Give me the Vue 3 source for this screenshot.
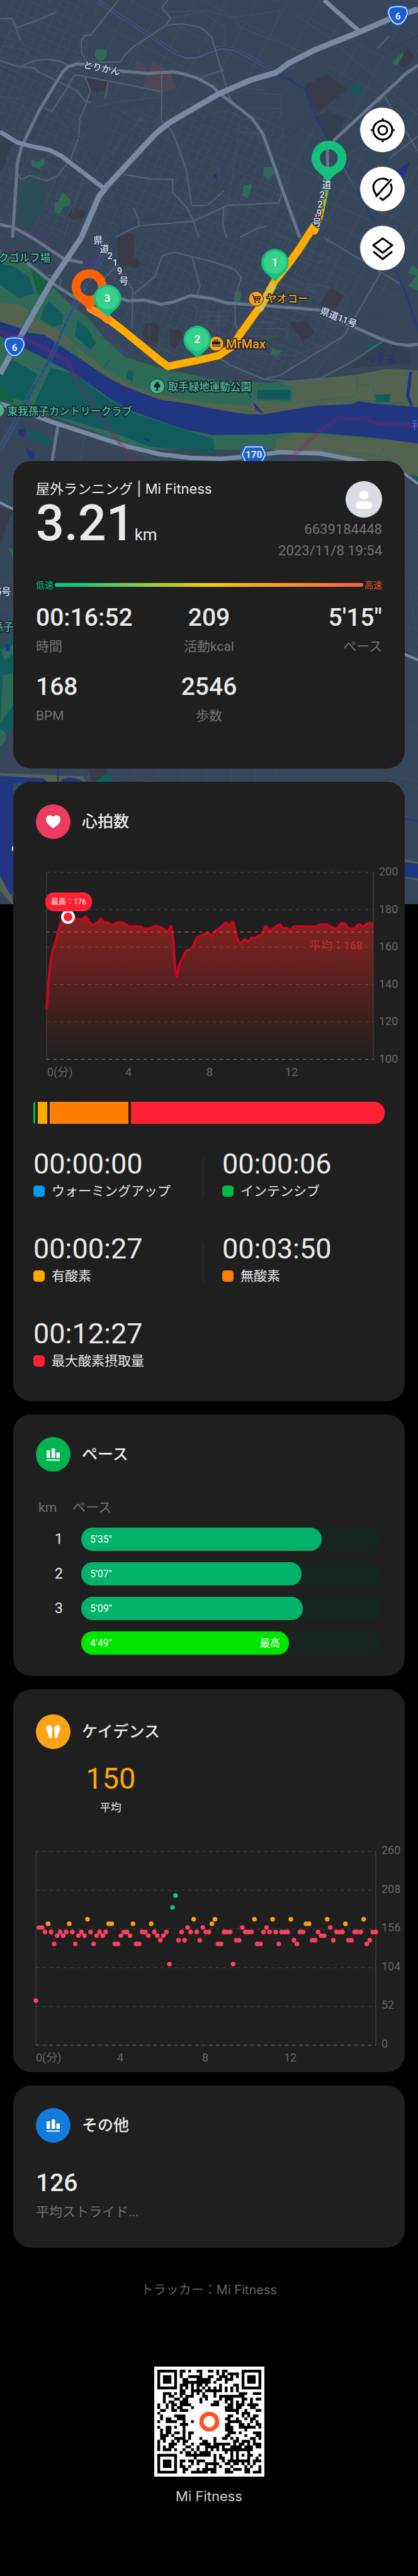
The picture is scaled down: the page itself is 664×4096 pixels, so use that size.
<script setup>
const summary = [
  { value: '00:16:52', label: '時間' },
  { value: '209', label: '活動kcal' },
  { value: '5\'15"', label: 'ペース' },
  { value: '168', label: 'BPM' },
  { value: '2546', label: '歩数' },
]

const zones = [
  { time: '00:00:00', label: 'ウォーミングアップ', kind: 'warm' },
  { time: '00:00:06', label: 'インテンシブ', kind: 'intense' },
  { time: '00:00:27', label: '有酸素', kind: 'aerobic' },
  { time: '00:03:50', label: '無酸素', kind: 'anaerobic' },
  { time: '00:12:27', label: '最大酸素摂取量', kind: 'vo2' },
]

const laps = [
  { km: '1', pace: '5\'35"', share: 80 },
  { km: '2', pace: '5\'07"', share: 73.3 },
  { km: '3', pace: '5\'09"', share: 73.7 },
  { km: '', pace: '4\'49"', share: 69, best: true },
]

// Heart rate: [position along the run in per mille, bpm]
const heart = [
  [0, 127], [10, 149], [20, 159], [32, 165.5], [41, 171.5], [50, 174.5], [60, 175.6], [68, 176], [80, 175.2],
  [90, 175.3], [100, 175], [110, 175], [120, 176.3], [130, 173.5], [140, 172], [150, 172.5], [158, 173.6],
  [165, 175.2], [173, 173.6], [179, 173], [186, 173.2], [195, 172.3], [205, 172], [216, 173], [228, 173.2],
  [240, 172.4], [252, 171], [265, 171], [286, 171], [297, 170], [318, 170], [328, 171], [340, 171], [350, 170.4],
  [362, 169], [374, 168.9], [381, 171.2], [387, 164], [394, 148], [399, 144.6], [405, 150], [417, 154.5],
  [428, 158], [441, 159], [450, 161], [460, 165], [470, 166], [482, 166.8], [496, 167.2], [506, 166], [517, 168.8],
  [526, 169.6], [537, 171.4], [549, 173], [561, 172], [570, 173.6], [576, 170], [581, 166], [588, 163], [594, 162],
  [606, 164], [616, 162.9], [628, 165], [638, 165], [650, 166], [661, 167], [667, 170], [672, 171.2], [681, 169],
  [692, 170], [702, 171], [713, 172.2], [724, 170.2], [735, 170.1], [746, 169], [757, 171], [768, 171], [800, 171],
  [825, 171], [837, 172.1], [857, 172.1], [869, 171], [881, 169.9], [889, 170], [898, 172], [907, 172.8], [916, 172],
  [924, 170], [943, 170], [951, 171.6], [958, 172.2], [966, 171], [976, 171.8], [989, 173], [995, 172.7], [1000, 172],
].map(([t, bpm]) => [53 + t * 0.519, 17 + (200 - bpm) * 2.975])

const heartLine = heart.reduce((d, [x, y], i, all) => {
  if (!i) return `M${x} ${y}`
  const p0 = all[Math.max(i - 2, 0)]
  const p1 = all[i - 1]
  const p3 = all[Math.min(i + 1, all.length - 1)]
  const n = (v) => v.toFixed(1)
  return `${d} C${n(p1[0] + (x - p0[0]) / 8)} ${n(p1[1] + (y - p0[1]) / 8)} ${n(x - (p3[0] - p1[0]) / 8)} ${n(y - (p3[1] - p1[1]) / 8)} ${n(x)} ${n(y)}`
}, '')
const heartArea = `${heartLine} L572 314.5 L53 314.5Z`
const heartTicks = [200, 180, 160, 140, 120, 100].map((v, i) => ({ v, y: 17 + i * 59.5 }))

// Cadence: steps per minute, equally spaced over the run
const cadence = [
  60, 158, 158, 152, 163, 152, 136, 147, 152, 147, 152, 163, 152, 136, 147, 152, 147, 169, 152, 136, 147, 152, 147,
  152, 163, 163, 136, 136, 147, 152, 152, 147, 163, 136, 136, 152, 152, 147, 163, 152, 147, 141, 147, 152, 109, 185,
  201, 141, 152, 141, 158, 152, 169, 152, 141, 158, 152, 152, 163, 169, 136, 136, 152, 152, 152, 109, 141, 141, 158,
  152, 152, 152, 169, 136, 136, 152, 158, 152, 169, 152, 136, 152, 152, 152, 169, 141, 136, 152, 152, 163, 163, 141,
  141, 152, 147, 147, 169, 158, 141, 152, 152, 152, 163, 141, 141, 152, 152, 152, 169, 136, 141, 152, 152,
].map((v, i, all) => ({
  x: 36 + (i * 540) / (all.length - 1),
  y: 326 - (v * 308) / 260,
  tone: v > 180 ? 'fast' : v > 160 ? 'mid' : 'slow',
}))
const cadenceTicks = [260, 208, 156, 104, 52, 0].map((v, i) => ({ v, y: 18 + i * 61.6 }))

// QR code: dark columns of every row
const qrRows = [
  '0-6 8-9 11 14-15 18-19 21 23-24 30-36',
  '0 6 8 15 21 23 25-28 30 36',
  '0 2-4 6 8 11-15 18-19 22-24 26 28 30 32-34 36',
  '0 2-4 6 9-10 14-18 21-22 24-26 30 32-34 36',
  '0 2-4 6 9-18 20 24 30 32-34 36',
  '0 6 8-10 12 14-15 17 22 27-28 30 36',
  '0-6 8 10 12 14 16 18 20 22 24 26 28 30-36',
  '8-9 12-15 17-22 24 26 28',
  '2-4 6 8-9 12 14 16 20 29-31 34-36',
  '2 4-5 8 10-12 16-17 20 22-30',
  '2 6-7 9-10 15 17 22 24-26 30-31 33 35-36',
  '2 4-5 8-10 15 20-21 24 26 28 30 33',
  '0 3 5-6 8-11 19-21 25-26 28-30 32-35',
  '0 3 5 7-8 12 24-26 28-29 33-34',
  '1-2 5-6 8-10 24-28 31 35-36',
  '0 28 30-32',
  '1 6-9 25-26 30 32 34-35',
  '1 3-4 7-9 24-25 28 31 33-34',
  '0 3-6 9 12 25-29 33 35',
  '8-10 24-25 29-30 32 35-36',
  '0 3-4 6 9 24-26 29-34 36',
  '1 3-4 9 24-26 31',
  '1 3-4 6-7 9 11-12 25-27 29 34-36',
  '1-3 5 9 11 24-25 31 35-36',
  '1-2 6-9 11 15 20 23-24 26 28 33-34 36',
  '0 2 5 7 9-10 16-17 20 27-28 30-32 34',
  '0 4-6 9 12 15-18 20-25 27 29-30 32 34-36',
  '0 2 4-5 10-11 14 17-21 23 26-29 31-33 35-36',
  '0 2-4 6 9 12 14 17 19 21 23-33',
  '8 10-11 13 15-18 24 26 28 32',
  '0-6 10-18 20 22 26 28 30 32-33 36',
  '0 6 13 20 22-23 26 28 32 35',
  '0 2-4 6 8-9 11-12 14-16 20 23 25-32 34-36',
  '0 2-4 6 8 12 14 17-21 24-25 27-28 30 32 34',
  '0 2-4 6 8-9 11 17 20 22 26 31 33 36',
  '0 6 9-10 14 16-20 24-25 27-29 31-32 36',
  '0-6 9 12-17 19-20 24-26 31-32 34-36',
]
const qrPath = qrRows
  .map((row, y) =>
    row
      .split(' ')
      .map((run) => {
        const [a, b = a] = run.split('-').map(Number)
        return `M${a} ${y}h${b - a + 1}v1h${a - b - 1}z`
      })
      .join(''),
  )
  .join('')

const kmPins = [
  { n: 3, x: 289, y: 803 },
  { n: 2, x: 531, y: 914 },
  { n: 1, x: 740, y: 707 },
]
const roadChars = [
  { c: '道', x: 879, y: 498 },
  { c: '2', x: 867, y: 526 },
  { c: '2', x: 862, y: 551 },
  { c: '9', x: 859, y: 575 },
  { c: '号', x: 853, y: 600 },
  { c: '県', x: 264, y: 648 },
  { c: '道', x: 281, y: 672 },
  { c: '2', x: 296, y: 690 },
  { c: '1', x: 310, y: 709 },
  { c: '9', x: 322, y: 731 },
  { c: '号', x: 333, y: 757 },
]
</script>

<template>
  <div class="page">
    <svg class="map" viewBox="0 0 1125 2436" role="img" aria-label="ランニングルート">
      <defs>
        <pattern id="streets" width="46" height="38" patternUnits="userSpaceOnUse" patternTransform="rotate(24)">
          <path d="M0 8H46M12 0V38M12 24H34V38M34 8V24" class="lane" />
        </pattern>
        <pattern id="fields" width="74" height="92" patternUnits="userSpaceOnUse" patternTransform="rotate(28)">
          <path d="M0 20H74M20 0V92" class="lane" />
        </pattern>
        <linearGradient id="track" gradientUnits="userSpaceOnUse" x1="885" y1="480" x2="850" y2="570">
          <stop offset="0" stop-color="#15bf7c" />
          <stop offset="1" stop-color="#ffae00" />
        </linearGradient>
      </defs>
      <rect width="1125" height="2436" fill="#37475b" />
      <path d="M0 0H240L230 280 250 640H0ZM300 300 600 260 500 520 300 640H220ZM560 300H760L800 640H420L440 480Z" fill="url(#streets)" />
      <path d="M240 0H860L960 120 760 190 580 250 300 280ZM900 60 1125 60V800H760L700 500 860 260Z" fill="url(#fields)" />
      <path d="M250 640H900L960 900 700 1030 330 900Z" fill="url(#streets)" />

      <g class="tile" transform="scale(.7175 .40816)">
        <path class="dark" d="M0 880 45 950 30 1010 15 1100 0 1120ZM1230 735 1290 780 1280 860 1250 930 1230 920 1185 770Z" />
        <path class="deep" d="M80 1185 113 1160 170 1195 165 1380 130 1470 100 1515 60 1430Z" />
        <path class="teal" d="M1340 548 1355 570 1352 620 1340 642 1313 590Z" />
        <path class="rose" d="M510 400 545 430 550 470 510 470ZM570 402 645 490 642 492 560 475ZM548 495H607V600L540 570ZM612 490H642L660 590 612 608Z" />
        <path class="brown" d="M320 510 405 540 400 600 345 605 325 560ZM1230 492 1300 590 1190 750 1150 640 1143 560ZM1530 315 1558 380 1520 455 1490 420ZM275 1365 320 1390 315 1440 270 1450 255 1420ZM485 1535 508 1555V1568H460Z" />
        <path class="park" d="M360 325 400 328 402 360 385 405 365 395 355 365ZM118 1050 140 1070 165 1042V1085L145 1115 118 1095ZM235 1265 265 1320 262 1350 240 1365 222 1412 207 1400 205 1340 218 1330ZM990 1105 1022 1103 1028 1140 1005 1185 988 1155ZM915 1220 945 1217 930 1310 910 1290ZM1508 345 1515 355 1490 432 1470 420Z" />
        <path class="violet" d="M85 1515 100 1540 170 1520 177 1568H80Z" />
        <path class="water" d="M1490 1125 1540 1065 1520 1160 1505 1180ZM800 1155 812 1148 814 1175 802 1180ZM1078 512 1110 545 1095 545ZM358 597 368 603 362 615ZM1150 560 1158 568 1153 578Z" />
        <path class="creek-edge" d="M360 0 555 225 660 350 700 380 740 375 810 322 840 315 880 325 960 400 1035 480M1290 1100 1340 1250" />
        <path class="creek" d="M360 0 555 225 660 350 700 373 740 368 810 320 840 313 880 322 960 400 1035 480 1080 520 1140 585 1185 770 1230 930 1300 1120 1340 1250 1410 1480" />
        <path class="stream" d="M1355 230 1568 570M1260 310 1440 620 1568 900M805 920 835 1090 835 1250M990 15 1060 30 1110 75" />
        <path class="alley" d="M445 0 340 232 318 235 305 270V345L320 390V410H452L460 380 500 310 620 170 640 120 607 50 630 0M620 168 680 157 745 175 770 205 795 250 825 430 860 640 880 690M0 400 60 435 130 450 140 470 290 600 315 660 340 680M85 432 130 400 180 392 225 405 255 432M320 510 340 600 315 720 300 780 295 910 265 1050 215 1160 175 1195 113 1158 80 1185 68 1150M195 735 245 600 275 505 290 495 610 605M165 710 195 738M607 490 605 800 640 850 665 950 700 1130 718 1350M465 1152 560 1180 648 1185V1270L700 1370 725 1450 745 1568M430 1568 520 1490 725 1460 855 1355 1045 1340 1060 1270M718 1358 778 1355 840 1262M0 122H45L60 185 77 268M60 185 130 140 210 82M405 540 395 650M755 520 770 500 840 460M500 1370 520 1450V1490M840 1370 835 1480 850 1568M900 1568 960 1510 1000 1492M1415 320 1460 240M1568 1000 1440 630 1420 680M1460 1045 1568 900" />
        <path class="lane" d="M610 80 780 70 880 120 900 180 1000 250 1150 350M640 120 760 80 845 180 840 300M0 300 100 330 130 420M860 120 1050 70 1030 180M920 715H1055V625L930 610M780 750 860 730 910 790 980 780M430 700 500 790 600 810M350 710 420 680 600 640M900 870 990 890M1000 600 940 580 850 620M1240 1340 1420 1480M1280 1040 1400 930M830 1568 870 1180 900 800M0 640 80 650 100 760 70 860M1110 100 1220 230 1400 500 1568 760M240 1568 300 1250 420 1000 540 760" />
        <path class="rail" d="M0 445 60 500 130 580 205 710 290 900 375 1120 435 1280 455 1400 450 1568M1568 235 1450 340 1270 620 1180 760 860 1240 780 1360 700 1420 520 1450 470 1500 430 1568" />
        <path class="rail ties" d="M0 445 60 500 130 580 205 710 290 900 375 1120 435 1280 455 1400 450 1568M1568 235 1450 340 1270 620 1180 760 860 1240 780 1360 700 1420 520 1450 470 1500 430 1568" />
        <path class="street" d="M47 1568 65 1080 80 970 150 720 235 475 255 440 290 422 330 425 400 450 440 467 555 485 650 475 690 488 740 515 800 575 825 620 890 705 945 780 985 880 1010 1000 1065 1280 1125 1568M1568 430 1520 490 1250 930M1227 960 1230 1180M0 1482 50 1500 120 1568" />
        <path class="road" d="M0 870 65 940 110 962 185 990 230 1030 395 1250M1215 0 1350 210" />
        <path class="trunk" d="M1568 60 1455 130 1350 210 1180 330 1085 415 1035 480 945 525 820 620 635 810 585 880 400 1230 370 1300 305 1568" />
      </g>

      <g class="tile" transform="translate(0 640) scale(.7175 .40816)">
        <path class="park" d="M0 85 90 160 200 330 270 450 330 530 400 680 470 790 600 860 780 930 1000 960 1340 905 1450 868 1568 875V1400H0Z" />
        <path class="teal" d="M0 170 50 190 110 260 130 370 70 400 0 310ZM165 460 185 420 238 510 235 570 200 590 152 540ZM30 790 140 900 110 1090 0 1040V900ZM190 860 280 900 330 970 420 1080 500 1160 600 1215 700 1275 800 1330 805 1420 560 1380 430 1290 230 1190 120 1130ZM290 540 330 600 360 700 340 740 280 650ZM480 875 502 890 498 950 475 930ZM965 1005H1090V1070H965Z" />
        <path class="moss" d="M110 170 200 330 160 395 140 370ZM0 980 50 1050 50 1090 0 1090Z" />
        <path class="olive" d="M0 430 65 440 110 480 85 560 80 600 0 555ZM125 500 150 560 220 610 280 700 265 745 165 640 110 625 105 560ZM275 705 400 880 500 980 600 1035 700 1070 830 1100 935 1108 950 1075 1095 1090 1100 990 1050 962 1340 905 1450 868 1568 880V1120L1340 1090 1180 1115 985 1170 830 1145 600 1070 470 990 300 800ZM1040 1330 1120 1290 1568 1350V1568H1500L1350 1475 1130 1400 1030 1410Z" />
        <path class="teal" d="M1408 1035H1462V1087H1408ZM1350 770 1390 710 1445 675 1430 715Z" />
        <path class="land" d="M0 1080 230 1200 500 1380 640 1430 830 1465 1050 1430 1200 1430 1450 1520V1600H0Z" />
        <path class="teal" d="M115 1260 192 1335 185 1385 100 1300Z" />
        <path class="river" d="M0 555 80 600 110 630 165 640 230 720 300 800 400 920 470 985 600 1070 700 1095 830 1140 920 1165 985 1168 1080 1140 1180 1110 1320 1100 1345 1080 1400 1095 1568 1120V1360L1400 1320 1200 1290 1100 1285 1000 1300 800 1303 700 1270 600 1210 500 1150 420 1070 330 960 280 900 200 830 110 745 0 650ZM948 1080 975 1130 990 1165 960 1140ZM70 1265 95 1260 90 1320 68 1300ZM95 1380 130 1420V1460H110ZM537 1320 565 1335 555 1352Z" />
        <path class="dark" d="M1440 685 1530 700 1540 830 1315 865 1340 820Z" />
        <path class="brown" d="M1240 330 1290 385 1250 490 1195 450ZM1085 560 1150 550 1180 630 1135 685ZM545 570 565 560 595 575 600 610 585 730 545 710 535 640ZM635 595 675 610 685 650 655 740 635 690ZM440 0H505L500 120 525 160 520 200 440 180Z" />
        <path class="violet" d="M370 90 385 150 345 190 310 200 310 170 340 150ZM935 450 1015 460 1010 490 940 480ZM910 640 955 620 950 680 905 690ZM400 570 430 610 410 670 395 640ZM395 270 440 330 410 330Z" />
        <path class="park" d="M890 352 905 362 900 425 882 425ZM1020 730 1055 750 1040 785 1015 765ZM1545 180 1568 210V260L1530 230ZM1568 240V350L1530 320Z" />
        <path class="water" d="M1418 755H1436V825H1418ZM1455 775H1480V785H1455ZM1455 800H1480V825H1455ZM1392 805H1404V822H1392Z" />
        <path class="creek" d="M1480 190 1520 360 1568 600M930 1020 942 1060" />
        <path class="channel" d="M1540 885 1530 1050 1545 1110" />
        <path class="stream" d="M800 230 830 320 880 500M870 800 930 870 1000 910 1130 860M1250 610 1380 690 1280 740M1310 580 1440 500 1500 400M1040 1475V1430M395 850 410 810" />
        <path class="field-line" d="M1340 905V1000L1325 1050 1095 1090M1340 970 1400 980 1410 1080 1525 1095 1520 900M1100 990 1000 960M1340 1070 1430 1090M1420 1470 1440 1380M1220 1400 1420 1440 1530 1490M280 540 450 740 560 880 650 1050M430 860 500 900 650 950" />
        <path class="alley" d="M610 120 655 97 720 125 800 160 880 210 905 262 880 400 883 570 900 640M495 600 497 340 430 180M610 120 580 260 497 380M1215 0 1500 305M820 790 860 840 990 935 1050 910 1290 650 1310 590 1430 225M990 935 1085 950 1200 930 1310 830 1440 680M180 250 205 250 230 280 220 330M440 180 385 280M720 125 750 320 740 380" />
        <path class="lane" d="M560 380V680L660 780M700 300 740 480 720 700M740 490H860M745 520H860M740 550H855M735 580H850M780 450V640M820 460V640M930 480 1080 560 1080 700M960 560H1040M950 600H1070M930 650H1060M920 760 1100 780 1260 680M1100 480 1310 590M1130 300 1240 330M960 280 1180 360M1060 80 1200 170 1300 60M1180 900 1290 650M540 700 640 760M220 1240 320 1300 300 1475M360 1330 600 1475" />
        <path class="street" d="M120 0 240 140 310 165M100 165 220 330 330 450M450 400 480 418 540 412 605 440 650 425 715 383 800 405 850 432 1000 450 1200 478 1290 560 1430 670 1480 700 1530 712 1568 705M218 1235 195 1475" />
        <path class="rail-band" d="M400 60 370 170 320 310 240 590 200 760 90 1110 0 1400" />
        <path class="rail" d="M430 0 370 170 320 310 240 590 200 760 90 1110 0 1400" />
        <path class="rail ties" d="M430 0 370 170 320 310 240 590 200 760 90 1110 0 1400" />
        <path class="trunk" d="M305 0 190 300 100 580 0 900" />
        <path class="road" d="M0 1095 60 1130 200 1220 480 1380 600 1430 720 1455 830 1460 900 1450 1050 1417 1200 1425 1350 1475 1480 1530" />
        <path class="border-glow" d="M0 620 100 670 250 810 300 980 370 1170 500 1475M1080 1475 1190 1290 1265 1195H1370L1400 1220 1568 1240" />
        <path class="border" d="M0 620 100 670 250 810 300 980 370 1170 500 1475M1080 1475 1190 1290 1265 1195H1370L1400 1220 1568 1240" />
      </g>

      <!-- areas seen around the cards -->
      <path class="olive" d="M1080 1220H1125V1285L1085 1262Z" />
      <path class="teal" d="M1104 1274 1125 1284V1298ZM0 1740 36 1712V1960L0 1985Z" />
      <path class="brown" d="M0 1367 36 1373 0 1467Z" />
      <path class="park" d="M36 1735 2 1750 12 1780 36 1760ZM8 1820 36 1812V1900L0 1950ZM0 1965C24 1970 20 2000 0 2012ZM24 1476 36 1480V1506Z" />
      <path class="water" d="M14 1736H28L26 1754H16Z" />
      <path d="M0 1354 36 1372M1088 1276 1125 1303M1088 1762 1125 1778" stroke="#7889a3" stroke-width="7" fill="none" />
      <path class="lane" d="M1088 1430 1125 1440M1088 1520 1125 1590M1095 1640 1110 1620 1125 1630M1088 1680 1125 1700M1100 1560 1125 1740M1088 1950 1125 1962M0 2018 36 1998M75 2070V2100M105 2070V2090M205 2070 230 2100M296 2070V2106M361 2070V2106M426 2070V2106M490 2070V2106M556 2070V2106M622 2070V2106M687 2070V2106M746 2070 738 2106M960 2070 1125 2105M1125 2120 1090 2180M300 2090 420 2106M0 1570 36 1560M0 1640 36 1650" />
      <path class="olive" d="M0 2083 225 2091 232 2106H0ZM0 2362 32 2412 36 2440 0 2400ZM1088 2314 1125 2322V2372L1088 2364Z" />
      <path d="M0 2090 118 2097 128 2110H36V2395L28 2411 0 2360ZM160 2110C165 2090 205 2090 230 2110ZM1088 2322 1125 2327V2367L1088 2362Z" fill="#203681" />
      <path d="M156 2070V2106M1088 2205 1125 2213" stroke="#22398a" stroke-width="4" />
      <path class="brown" d="M236 2070H285L292 2084 256 2106 244 2098Z" />
      <path d="M288 2083 305 2106H256Z" fill="#006860" />
      <circle cx="42" cy="2286" r="10" fill="#fff" />

      <path d="M881 480 868 543 854 604 846 622" class="route" stroke="url(#track)" />
      <path d="M854 596 825 640 804 673 775 713 739 758 707 816 646 901 624 934 588 958 531 971 452 987 430 971 330 889 287 856 244 832" class="route" stroke="#ffae00" />
      <path d="M733 772 708 815 700 830" class="route" stroke="#d8bf3a" />
      <path d="M290 862 270 845 242 830" class="route" stroke="#ff8a1a" />

      <g class="label pale">
        <text x="223" y="182" transform="rotate(12 223 182)">とりかん</text>
        <text x="860" y="844" transform="rotate(22 860 844)">県道11号</text>
        <text v-for="(r, i) in roadChars" :key="i" :x="r.x" :y="r.y + 8" text-anchor="middle">{{ r.c }}</text>
        <text x="-10" y="1603">5号</text>
      </g>
      <g class="label green">
        <text x="-4" y="705">クゴルフ場</text>
        <text x="452" y="1052">取手緑地運動公園</text>
        <text x="20" y="1118">東我孫子カントリークラブ</text>
        <text x="-20" y="1700">孫子</text>
      </g>
      <g class="label amber">
        <text x="717" y="815">ヤオコー</text>
        <text x="608" y="939" class="latin">MrMax</text>
      </g>
      <text x="1108" y="1156" class="river-name">利</text>

      <g stroke="#17202c" stroke-width="1.5">
        <circle cx="689" cy="805" r="20" fill="#f5a11a" />
        <circle cx="582" cy="926" r="20" fill="#f5a11a" />
        <circle cx="423" cy="1041" r="20" fill="#45b48b" />
        <circle cx="-8" cy="1105" r="20" fill="#45b48b" />
      </g>
      <g fill="none" stroke="#17202c" stroke-width="2">
        <path d="M677 795H681L685 809H698L701 799H682M684 804H700M687 799V809M692 799V809M697 799V809" />
        <circle cx="687" cy="814" r="1.5" /><circle cx="697" cy="814" r="1.5" />
        <path d="M578 920V916H586V920" />
        <path d="M571 920H593V928H571ZM571 931H593V933H571Z" fill="#17202c" stroke="none" />
        <path d="M423 1029C419 1029 419 1033 418 1035 414 1036 413 1043 418 1044H421V1050L418 1052H428L425 1050V1044H429C433 1043 432 1036 428 1035 427 1032 427 1029 423 1029Z" fill="#17202c" stroke="none" />
      </g>

      <g v-for="s in [[1071, 42], [39, 935]]" :key="s[1]" :transform="`translate(${s[0]} ${s[1]})`">
        <path d="M-22-26Q0-31 22-26 30-18 29-6 24 12 13 22 0 32-13 22-24 12-29-6-30-18-22-26Z" fill="#1a5fd0" />
        <path d="M-19-22Q0-27 19-22 26-15 25-5 21 10 11 19 0 27-11 19-21 10-25-5-26-15-19-22Z" fill="#1a5fd0" stroke="#d3def2" stroke-width="3" />
        <text y="10" class="shield">6</text>
      </g>
      <g transform="translate(683 1224)">
        <path d="M-26-24H26L36 0 26 24H-26L-36 0Z" fill="#1a5fd0" />
        <path d="M-22-20H22L31 0 22 20H-22L-31 0Z" fill="none" stroke="#d3def2" stroke-width="3" />
        <text y="9" class="shield">170</text>
      </g>

      <path fill-rule="evenodd" d="M883 488Q870 474 850 457A47 47 0 1 1 919 459Q900 470 883 488ZM885 402A24 24 0 1 0 885 450 24 24 0 1 0 885 402Z" fill="#15bf7c" />
      <path fill-rule="evenodd" d="M240 834Q222 818 206 805A47 47 0 1 1 274 805Q258 818 240 834ZM240 749A24 24 0 1 0 240 797 24 24 0 1 0 240 749Z" fill="#ff6200" />
      <g v-for="p in kmPins" :key="p.n" :transform="`translate(${p.x} ${p.y})`">
        <path d="M0 51Q-13 38-27 26A37 37 0 1 1 27 26Q13 38 0 51Z" fill="#15bf7c" />
        <circle r="31" fill="#39d08c" />
        <text y="10" class="pin-number">{{ p.n }}</text>
      </g>
    </svg>

    <nav class="tools" aria-label="地図">
      <button type="button" aria-label="現在地">
        <svg viewBox="0 0 48 48"><circle cx="24" cy="24" r="15" /><circle cx="24" cy="24" r="7" /><path d="M24 5V10M24 38V43M5 24H10M38 24H43" /></svg>
      </button>
      <button type="button" aria-label="ピンを隠す">
        <svg viewBox="0 0 48 48"><path d="M14 33C8 25 8 18 11 14 16 6 27 5 33 10M36 15C40 21 38 28 34 33L24 41 19 37M38 8 13 36" /></svg>
      </button>
      <button type="button" aria-label="レイヤー">
        <svg viewBox="0 0 48 48"><path d="M24 8 39 19 24 31 9 19ZM9 29 24 41 39 29" /></svg>
      </button>
    </nav>

    <main class="content">
      <section class="card summary">
        <header class="run">
          <div>
            <h1>屋外ランニング | Mi Fitness</h1>
            <p class="distance"><strong>3.21</strong><span>km</span></p>
          </div>
          <div class="user">
            <svg class="avatar" viewBox="0 0 58 58" aria-hidden="true">
              <circle cx="29" cy="29" r="29" fill="#dadde4" />
              <circle cx="29" cy="22" r="7" fill="#fff" />
              <rect x="16" y="32" width="26" height="12" rx="6" fill="#fff" />
            </svg>
            <p>6639184448</p>
            <p>2023/11/8 19:54</p>
          </div>
        </header>
        <div class="speed"><span class="low">低速</span><i></i><span class="high">高速</span></div>
        <dl class="stats">
          <div v-for="s in summary" :key="s.label"><dd>{{ s.value }}</dd><dt>{{ s.label }}</dt></div>
        </dl>
      </section>

      <section class="card heart">
        <header class="head">
          <svg viewBox="0 0 55 55" aria-hidden="true">
            <circle cx="27.5" cy="27.5" r="27.5" fill="#ec3c60" />
            <path d="M27.5 20C24 15 16 17 16 24 16 30 22 34 27.5 38 33 34 39 30 39 24 39 17 31 15 27.5 20Z" fill="#fff" />
          </svg>
          <h2>心拍数</h2>
        </header>
        <svg class="chart" viewBox="0 0 622 350" role="img" aria-label="心拍数">
          <defs>
            <linearGradient id="glow" x1="0" y1="0" x2="0" y2="1">
              <stop offset="0" stop-color="#ff261e" stop-opacity=".46" />
              <stop offset="1" stop-color="#ff261e" stop-opacity="0" />
            </linearGradient>
          </defs>
          <path :d="heartArea" fill="url(#glow)" />
          <path d="M53 17V314M572 17V314" class="axis" />
          <line v-for="t in heartTicks" :key="t.v" x1="53" x2="572" :y1="t.y" :y2="t.y" class="grid" :class="{ base: t.v === 100 }" />
          <path :d="heartLine" class="pulse" />
          <path d="M53 112H572" class="mean" />
          <text x="555" y="140" class="mean-text">平均：168</text>
          <circle cx="87" cy="88" r="9" fill="#ff2033" stroke="#fff" stroke-width="4" />
          <rect x="51" y="49" width="74" height="30" rx="14" fill="#ff2033" />
          <text x="88" y="68" class="peak-text">最高：176</text>
          <text v-for="t in heartTicks" :key="'h' + t.v" x="581" :y="t.y + 5" class="tick">{{ t.v }}</text>
          <text x="54" y="341" class="tick">0(分)</text>
          <text x="183" y="341" class="tick center">4</text>
          <text x="312" y="341" class="tick center">8</text>
          <text x="442" y="341" class="tick center">12</text>
        </svg>
        <div class="split"><i class="intense"></i><i class="aerobic"></i><i class="anaerobic"></i><i class="vo2"></i></div>
        <dl class="zones">
          <div v-for="z in zones" :key="z.kind"><dd>{{ z.time }}</dd><dt><i :class="z.kind"></i>{{ z.label }}</dt></div>
        </dl>
      </section>

      <section class="card pace">
        <header class="head">
          <svg viewBox="0 0 55 55" aria-hidden="true">
            <circle cx="27.5" cy="27.5" r="27.5" fill="#02b44f" />
            <path d="M17 22Q17 21 18 21H21.5Q22.5 21 22.5 22V33H17ZM25 19Q25 18 26 18H29.5Q30.5 18 30.5 19V33H25ZM32.5 25.5Q32.5 24.5 33.5 24.5H37Q38 24.5 38 25.5V33H32.5ZM17 35.5H38V37.5H17Z" fill="#fff" />
          </svg>
          <h2>ペース</h2>
        </header>
        <table>
          <thead><tr><th scope="col">km</th><th scope="col">ペース</th></tr></thead>
          <tbody>
            <tr v-for="l in laps" :key="l.pace">
              <td class="km">{{ l.km }}</td>
              <td class="lap"><div class="rail-bar"><div class="fill" :class="{ best: l.best }" :style="{ width: l.share + '%' }"><span>{{ l.pace }}</span><span v-if="l.best">最高</span></div></div></td>
            </tr>
          </tbody>
        </table>
      </section>

      <section class="card cadence">
        <header class="head">
          <svg viewBox="0 0 55 55" aria-hidden="true">
            <circle cx="27.5" cy="27.5" r="27.5" fill="#fda416" />
            <path d="M21 17C24 17 26 20 26 24 26 27 25 29 25.5 33 26 36 25 38 23.5 38 21 38 20.5 36 20 33 19.5 29 16.5 27 16.5 23 16.5 19 18.5 17 21 17ZM34 17C31 17 29 20 29 24 29 27 30 29 29.5 33 29 36 30 38 31.5 38 34 38 34.5 36 35 33 35.5 29 38.5 27 38.5 23 38.5 19 36.5 17 34 17Z" fill="#fff" />
          </svg>
          <h2>ケイデンス</h2>
        </header>
        <div class="average"><strong>150</strong><span>平均</span></div>
        <svg class="chart" viewBox="0 0 622 364" role="img" aria-label="ケイデンス">
          <path d="M36 18V326M576 18V326" class="axis" />
          <line v-for="t in cadenceTicks" :key="t.v" x1="36" x2="576" :y1="t.y" :y2="t.y" class="grid" :class="{ base: t.v === 0 }" />
          <circle v-for="(c, i) in cadence" :key="i" :cx="c.x" :cy="c.y" r="3.7" :class="c.tone" />
          <text v-for="t in cadenceTicks" :key="'c' + t.v" x="585" :y="t.y + 4" class="tick">{{ t.v }}</text>
          <text x="36" y="352" class="tick">0(分)</text>
          <text x="170" y="352" class="tick center">4</text>
          <text x="305" y="352" class="tick center">8</text>
          <text x="440" y="352" class="tick center">12</text>
        </svg>
      </section>

      <section class="card other">
        <header class="head">
          <svg viewBox="0 0 55 55" aria-hidden="true">
            <circle cx="27.5" cy="27.5" r="27.5" fill="#137bdc" />
            <path d="M17 22Q17 21 18 21H21.5Q22.5 21 22.5 22V33H17ZM25 19Q25 18 26 18H29.5Q30.5 18 30.5 19V33H25ZM32.5 25.5Q32.5 24.5 33.5 24.5H37Q38 24.5 38 25.5V33H32.5ZM17 35.5H38V37.5H17Z" fill="#fff" />
          </svg>
          <h2>その他</h2>
        </header>
        <dl class="stats"><div><dd>126</dd><dt>平均ストライド...</dt></div></dl>
      </section>
    </main>

    <footer class="foot">
      <p class="tracker">トラッカー：Mi Fitness</p>
      <svg class="qr" viewBox="-1.1 -1.1 39.2 39.2" role="img" aria-label="QRコード">
        <rect x="-1.1" y="-1.1" width="39.2" height="39.2" fill="#fff" />
        <path :d="qrPath" fill="#000" />
        <rect x="13" y="13" width="11.1" height="11" rx="1" fill="#fff" />
        <circle cx="18.5" cy="18.5" r="2.8" fill="none" stroke="#ff5125" stroke-width="1.5" />
      </svg>
      <p class="brand">Mi Fitness</p>
    </footer>
  </div>
</template>

<style>
body {
  margin: 0;
  background: #000;
}
</style>

<style scoped>
.page {
  position: relative;
  background: #000;
  color: #eaeaea;
  font-family: Roboto, "Noto Sans CJK JP", sans-serif;
}
h1, h2, p, dl, dd, dt {
  margin: 0;
  font-weight: 400;
}
.map {
  position: absolute;
  top: 0;
  left: 0;
  width: 100%;
  height: auto;
}
.tile path {
  vector-effect: non-scaling-stroke;
  stroke-linejoin: round;
}
.land { fill: #37475b; }
.dark { fill: #313f50; }
.deep { fill: #2e4c58; }
.teal { fill: #125b5c; }
.moss { fill: #165f42; }
.park { fill: #2f6a57; }
.olive { fill: #53634f; }
.brown { fill: #393c48; }
.rose { fill: #504653; }
.violet { fill: #433f6d; }
.water, .river { fill: #203681; }
.lane { fill: none; stroke: #455364; stroke-width: 1; }
.alley { fill: none; stroke: #56616f; stroke-width: 2; }
.street { fill: none; stroke: #67758b; stroke-width: 5; }
.road { fill: none; stroke: #7889a3; stroke-width: 7; }
.trunk { fill: none; stroke: #7889a3; stroke-width: 9; }
.creek-edge { fill: none; stroke: #4c5a5c; stroke-width: 5; }
.creek { fill: none; stroke: #22398a; stroke-width: 2; }
.channel { fill: none; stroke: #203681; stroke-width: 5; }
.stream { fill: none; stroke: #2b3f76; stroke-width: 1; }
.field-line { fill: none; stroke: #137066; stroke-width: 1; }
.rail { fill: none; stroke: #2b4165; stroke-width: 1; }
.ties { stroke-width: 4; stroke-dasharray: 1 9; }
.rail-band { fill: none; stroke: #3a5a86; stroke-opacity: .5; stroke-width: 9; }
.border-glow { fill: none; stroke: #8a1f6a; stroke-opacity: .25; stroke-width: 8; }
.border { fill: none; stroke: #8a1f6a; stroke-opacity: .7; stroke-width: 1; stroke-dasharray: 9 4 2 4; }
.route { fill: none; stroke-width: 20; stroke-linejoin: round; stroke-linecap: round; }
.label {
  font-family: Roboto, "Noto Sans CJK JP", sans-serif;
  font-size: 28px;
  font-weight: 500;
  paint-order: stroke;
  stroke-width: 6px;
  stroke: #1b2633;
  stroke-linejoin: round;
}
.label .latin { font-size: 34px; }
.pale { fill: #d5def0; font-size: 25px; stroke: #2f3e54; }
.green { fill: #48b890; }
.amber { fill: #f5a11a; }
.river-name { fill: #4a67d8; font-size: 28px; }
.shield, .pin-number {
  fill: #e6edfb;
  font-size: 26px;
  font-weight: 700;
  text-anchor: middle;
}
.pin-number { fill: #fff; font-size: 29px; font-weight: 500; }

.tools {
  position: absolute;
  top: 171px;
  right: 21px;
  display: flex;
  flex-direction: column;
  gap: 23px;
}
.tools button {
  display: grid;
  place-items: center;
  width: 71px;
  height: 71px;
  padding: 0;
  border: 0;
  border-radius: 50%;
  background: #fff;
}
.tools svg {
  width: 48px;
  height: 48px;
  fill: none;
  stroke: #000;
  stroke-width: 3;
}

.content {
  position: relative;
  display: flex;
  flex-direction: column;
  gap: 21px;
  padding: 733px 21px 0;
  pointer-events: none;
}
.card {
  box-sizing: border-box;
  border-radius: 28px;
  background: #1f1f1f;
  pointer-events: auto;
}
.summary { padding: 32px 36px 70px; }
.run {
  display: flex;
  justify-content: space-between;
}
h1 {
  font: 400 22px/24px Inter, "Noto Sans CJK JP", sans-serif;
}
.distance {
  display: flex;
  align-items: baseline;
}
.distance strong {
  font-size: 79px;
  font-weight: 500;
  line-height: 86px;
}
.distance span {
  font-size: 26px;
}
.user {
  text-align: right;
  color: #737373;
  font-size: 22px;
  line-height: 34px;
}
.avatar {
  display: block;
  width: 58px;
  height: 58px;
  margin: 0 0 2px auto;
}
.speed {
  display: flex;
  align-items: center;
  gap: 2px;
  margin-top: 27px;
  font-size: 14px;
  line-height: 20px;
}
.speed i {
  flex: 1;
  height: 6px;
  border-radius: 3px;
  background: linear-gradient(90deg, #00cc88 4%, #ffcc00 50%, #ff5a46);
}
.low { color: #00b886; }
.high { color: #e4521d; }
.stats {
  display: grid;
  grid-template-columns: repeat(3, 1fr);
  row-gap: 26px;
  margin-top: 18px;
}
.stats dd {
  font-size: 39px;
  font-weight: 500;
  line-height: 48px;
}
.stats dt {
  margin-top: 8px;
  color: #737373;
  font-size: 21px;
  line-height: 28px;
}
.stats div:nth-child(3n + 2) { text-align: center; }
.stats div:nth-child(3n) { text-align: right; }

.head {
  display: flex;
  align-items: center;
  gap: 18px;
  padding: 36px 36px 0;
}
.head svg {
  width: 55px;
  height: 55px;
}
h2 {
  font-size: 25px;
  font-weight: 500;
  line-height: 36px;
}
.chart {
  display: block;
  width: 100%;
}
.heart { padding-bottom: 50px; }
.heart .chart { margin-top: 36px; }
.axis { fill: none; stroke: #484848; stroke-width: 1; }
.grid { stroke: #fff; stroke-opacity: .18; stroke-width: 1; stroke-dasharray: 5 6; }
.base { stroke-opacity: .4; }
.pulse { fill: none; stroke: #c4091e; stroke-width: 4; stroke-linejoin: round; }
.mean { stroke: #e0405f; stroke-opacity: .65; stroke-width: 2; stroke-dasharray: 5 6; }
.mean-text { fill: #c03038; font-size: 18px; text-anchor: end; }
.peak-text { fill: #fff; font-size: 12px; text-anchor: middle; }
.tick { fill: #666; font-size: 18px; }
.center { text-anchor: middle; }
.split {
  display: flex;
  gap: 4px;
  height: 35px;
  margin: 32px 32px 0;
  overflow: hidden;
  border-radius: 3px 16px 16px 3px;
}
.split i { flex: 404; }
.split i.intense { flex: 3; }
.split i.aerobic { flex: 15; }
.split i.anaerobic { flex: 125; }
.warm { background: #009dee; }
.intense { background: #00bb46; }
.aerobic { background: #fda900; }
.anaerobic { background: #ff7d00; }
.vo2 { background: #ff2033; }
.zones {
  display: grid;
  grid-template-columns: 269fr 289fr;
  row-gap: 52px;
  margin: 38px 32px 0;
}
.zones div { position: relative; }
.zones div:nth-child(even) { padding-left: 31px; }
.zones div:nth-child(even)::before {
  content: "";
  position: absolute;
  top: 16px;
  bottom: 4px;
  left: 0;
  width: 1px;
  background: #343434;
}
.zones dd {
  font-size: 45px;
  line-height: 52px;
}
.zones dt {
  display: flex;
  align-items: center;
  gap: 11px;
  margin-top: 3px;
  font-size: 21px;
  line-height: 28px;
}
.zones i {
  width: 18px;
  height: 18px;
  border-radius: 5px;
}

.pace { padding-bottom: 16px; }
table {
  width: calc(100% - 72px);
  margin: 43px 36px 0;
  border-collapse: collapse;
}
th {
  padding: 0 0 18px;
  color: #737373;
  font-size: 21px;
  font-weight: 400;
  line-height: 28px;
  text-align: left;
}
th:first-child {
  width: 54px;
  padding-left: 4px;
}
td { padding: 0 0 18px; }
.km {
  padding-right: 15px;
  font-size: 23px;
  line-height: 37px;
  text-align: right;
}
.lap { padding-left: 14px; }
.rail-bar {
  height: 37px;
  border-radius: 18px;
  background: #162520;
}
.fill {
  box-sizing: border-box;
  display: flex;
  justify-content: space-between;
  height: 37px;
  padding: 0 14px;
  border-radius: 18px;
  background: #03b26a;
  color: #fff;
  font-size: 16px;
  line-height: 37px;
}
.best { background: #00e600; }

.cadence { padding-bottom: 5px; }
.cadence .head { padding-top: 40px; }
.average {
  display: flex;
  flex-direction: column;
  align-items: center;
  width: 44%;
  margin: 19px 0 40px 18px;
}
.average strong {
  color: #fda900;
  font-size: 47px;
  font-weight: 400;
  line-height: 56px;
}
.average span {
  margin-top: 6px;
  font-size: 17px;
  line-height: 24px;
}
.slow { fill: #ff4060; }
.mid { fill: #ff9f0a; }
.fast { fill: #00cc88; }

.other { padding-bottom: 43px; }
.other .stats {
  margin: 40px 36px 0;
  white-space: nowrap;
}

.foot {
  display: flex;
  flex-direction: column;
  align-items: center;
  padding: 53px 0 114px;
  font-family: Inter, "Noto Sans CJK JP", sans-serif;
  line-height: 28px;
}
.tracker {
  color: #666;
  font-size: 20px;
}
.qr {
  width: 175px;
  height: 175px;
  margin: 108px 0 17px;
}
.brand {
  color: #d0d0d0;
  font-size: 22px;
}
</style>
